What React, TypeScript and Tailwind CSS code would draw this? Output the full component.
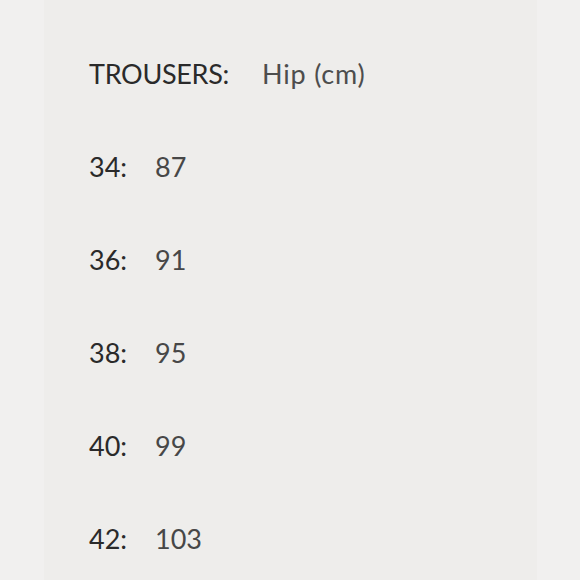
import React from 'react';

const rows = [
  { size: '34', hip: '87' },
  { size: '36', hip: '91' },
  { size: '38', hip: '95' },
  { size: '40', hip: '99' },
  { size: '42', hip: '103' },
];

const App: React.FC = () => {
  return (
    <div className="flex h-[580px] w-[580px] overflow-hidden bg-[#eeedeb] font-['Lato','Open_Sans',sans-serif]">
      <div className="h-full w-[44px] shrink-0 bg-[#f1f0ef]" />
      <div className="flex flex-1 flex-col pl-[45px] pt-[27px]">
        <div className="flex h-[93px] shrink-0 items-center text-[27px] leading-none">
          <span className="w-[173px] tracking-[-0.3px] text-[#2a2a2a]">TROUSERS:</span>
          <span className="tracking-[0.8px] text-[#4d4d4d]">Hip (cm)</span>
        </div>
        {rows.map((row) => (
          <div key={row.size} className="flex h-[93px] shrink-0 items-center text-[27px] leading-none">
            <span className="w-[66px] text-[#2a2a2a]">{row.size}:</span>
            <span className="text-[#474747]">{row.hip}</span>
          </div>
        ))}
      </div>
      <div className="h-full w-[43px] shrink-0 bg-[#f1f0ef]" />
    </div>
  );
};

export default App;
